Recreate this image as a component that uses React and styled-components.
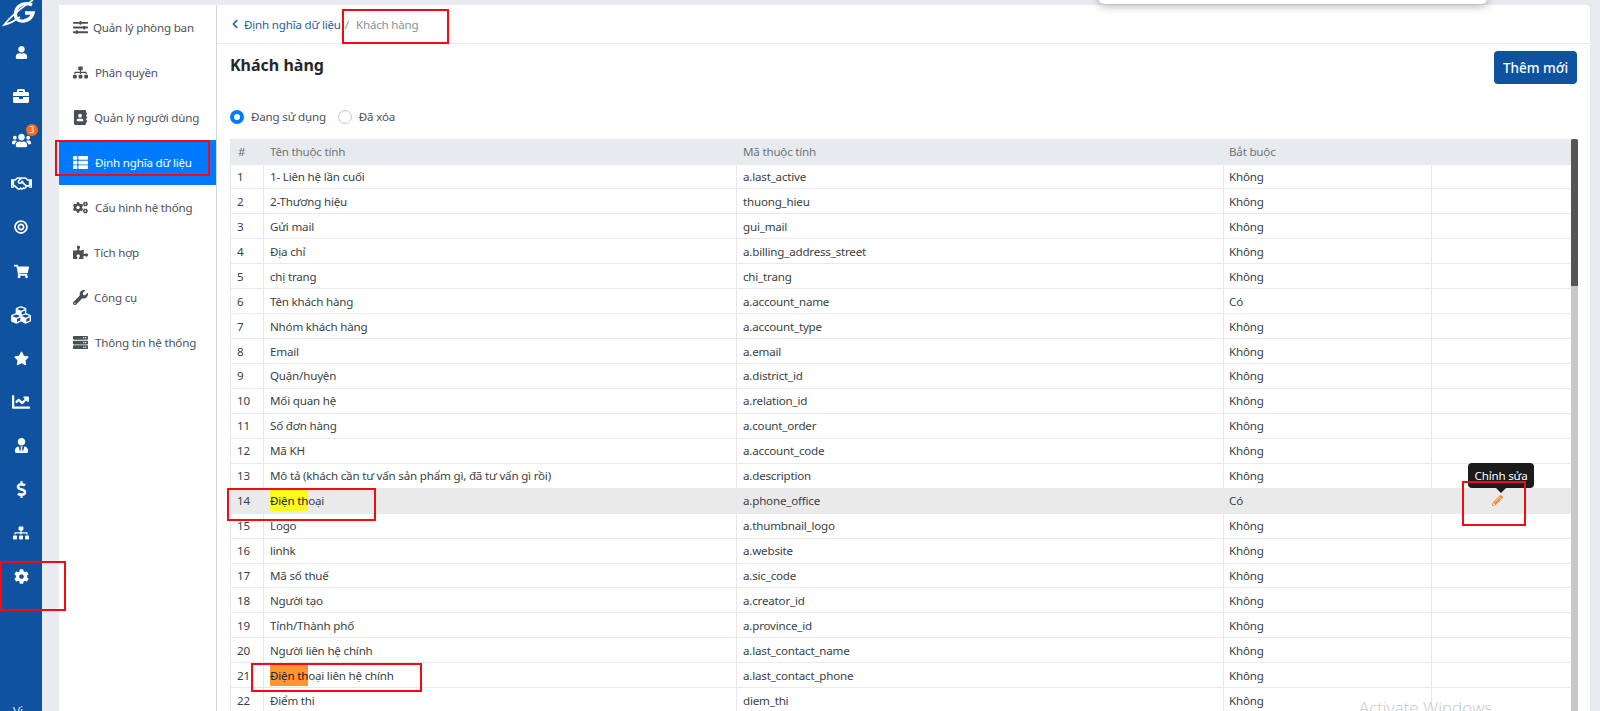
import React from "react";
import styled, { createGlobalStyle } from "styled-components";
import {
  FaUser, FaBriefcase, FaUsers, FaRegHandshake, FaBullseye, FaShoppingCart, FaCubes, FaStar,
  FaChartLine, FaUserTie, FaDollarSign, FaSitemap, FaCog, FaSlidersH, FaAddressBook, FaThList,
  FaCogs, FaPuzzlePiece, FaWrench, FaServer, FaPencilAlt, FaChevronLeft,
} from "react-icons/fa";

const GlobalStyle = createGlobalStyle`
  html, body { margin: 0; height: 100%; overflow: hidden; }
  body {
    font-family: "Noto Sans", "Open Sans", sans-serif;
    font-size: 11.6px;
    letter-spacing: -0.2px;
    color: #33383e;
    background: #e9ebf0;
  }
  * { box-sizing: border-box; }
`;

const Page = styled.div`
  position: relative;
  display: flex;
  width: 1600px;
  height: 711px;
  overflow: hidden;
`;

const Rail = styled.nav`
  position: relative;
  flex: 0 0 42px;
  background: #0f529f;
  color: #fff;
  display: flex;
  flex-direction: column;
  align-items: center;
  padding-top: 31px;
`;

const RailItem = styled.div`
  position: relative;
  width: 100%;
  flex: 0 0 43.65px;
  display: flex;
  align-items: center;
  justify-content: center;
  font-size: ${(p) => p.$size || 15}px;
`;

const Badge = styled.span`
  position: absolute;
  top: 6px;
  left: 26px;
  width: 12px;
  height: 12px;
  border-radius: 50%;
  background: #f26b21;
  color: #fff;
  font-size: 8px;
  line-height: 12px;
  text-align: center;
`;

const LogoMark = styled.svg`
  position: absolute;
  top: 0;
  left: 2px;
`;

const RailFoot = styled.span`
  position: absolute;
  left: 13px;
  bottom: -9px;
  font-size: 12px;
  color: #dfe8f3;
`;

const SubNav = styled.aside`
  flex: 0 0 158px;
  margin: 5px 0 0 17px;
  background: #fff;
  border-right: 1px solid #d5d7db;
`;

const SubItem = styled.div`
  height: 45px;
  display: flex;
  align-items: center;
  padding-left: 14px;
  gap: ${(p) => p.$gap}px;
  color: ${(p) => (p.$active ? "#fff" : "#4b5259")};
  background: ${(p) => (p.$active ? "#007bff" : "transparent")};
  svg {
    font-size: 15px;
    color: ${(p) => (p.$active ? "#fff" : "#4a4f55")};
  }
`;

const Main = styled.main`
  flex: 0 0 1373px;
  margin-top: 5px;
  background: #fff;
  border-top-right-radius: 4px;
  display: flex;
  flex-direction: column;
`;

const Crumbs = styled.div`
  flex: 0 0 39px;
  display: flex;
  align-items: center;
  padding: 0 13px;
  border-bottom: 1px solid #e9ebf0;
  color: #8b9197;
`;

const CrumbLink = styled.span`
  display: flex;
  align-items: center;
  gap: 4px;
  color: #2a6098;
  svg { font-size: 10px; }
`;

const CrumbSep = styled.span`
  margin: 0 7px 0 4px;
`;

const TitleRow = styled.div`
  display: flex;
  justify-content: space-between;
  align-items: flex-start;
  padding: 7px 13px 0;
`;

const Title = styled.h1`
  margin: 3px 0 0;
  font-size: 16px;
  line-height: 22px;
  font-weight: 700;
  letter-spacing: 0;
  color: #23272b;
`;

const AddButton = styled.button`
  width: 83px;
  height: 33px;
  border: 0;
  border-radius: 4px;
  background: #0f529f;
  color: #fff;
  font: 500 13.5px "Noto Sans", sans-serif;
`;

const Filters = styled.div`
  display: flex;
  align-items: center;
  gap: 12px;
  margin: 25px 0 0 13px;
  height: 20px;
`;

const RadioLabel = styled.label`
  display: flex;
  align-items: center;
  gap: 7px;
  color: #4b5259;
`;

const RadioDot = styled.span`
  width: 14px;
  height: 14px;
  border-radius: 50%;
  border: ${(p) => (p.$on ? "4px solid #007bff" : "1px solid #c5c8cc")};
  background: #fff;
`;

const TableWrap = styled.div`
  display: flex;
  margin: 15px 0 0 13px;
  width: 1347px;
`;

const Table = styled.div`
  flex: 1;
  display: grid;
  grid-template-columns: 33px 473px 487px 208px 139px;
  grid-template-rows: 25.5px;
  grid-auto-rows: 24.95px;
  border-left: 1px solid #e6e8ee;
`;

const Row = styled.div`
  display: contents;
`;

const HeadCell = styled.div`
  display: flex;
  align-items: center;
  padding-left: ${(p) => p.$pad ?? 6}px;
  background: #e8ebee;
  color: #6d747b;
`;

const Cell = styled.div`
  display: flex;
  align-items: center;
  padding-left: ${(p) => p.$pad ?? 6}px;
  border-bottom: 1.5px solid #e8eaee;
  border-right: ${(p) => (p.$line ? "1.5px solid #e6e8ee" : "0")};
  background: ${(p) => (p.$hover ? "#eaeaea" : "#fff")};
  color: #3a3f45;
  white-space: pre;
`;

const ActionCell = styled(Cell)`
  justify-content: center;
  padding: 0 8px 0 0;
`;

const Mark = styled.mark`
  background: ${(p) => p.$bg};
  color: #1c1c1c;
  padding: 3px 0;
`;

const EditIcon = styled(FaPencilAlt)`
  color: #f58a3c;
  font-size: 11px;
`;

const ScrollBar = styled.div`
  flex: 0 0 7px;
  height: 600px;
  background: #c8c8c8;
`;

const ScrollThumb = styled.div`
  height: 147px;
  background: #555;
  border-radius: 2px 2px 0 0;
`;

const Popover = styled.div`
  position: absolute;
  top: -10px;
  left: 1099px;
  width: 388px;
  height: 14px;
  background: #fff;
  border-radius: 0 0 5px 5px;
  box-shadow: 0 2px 10px rgba(0, 0, 0, 0.3);
`;

const Tip = styled.div`
  position: absolute;
  left: 1468px;
  top: 463px;
  width: 66px;
  height: 25px;
  background: #1b1b1b;
  color: #fff;
  border-radius: 4px;
  font-size: 11.6px;
  line-height: 26px;
  text-align: center;
  &::after {
    content: "";
    position: absolute;
    left: 27px;
    bottom: -5px;
    border: 6px solid transparent;
    border-bottom: 0;
    border-top-color: #1b1b1b;
  }
`;

const RedBox = styled.div`
  position: absolute;
  left: ${(p) => p.$x}px;
  top: ${(p) => p.$y}px;
  width: ${(p) => p.$w}px;
  height: ${(p) => p.$h}px;
  border: 2px solid #f40a12;
`;

const Watermark = styled.div`
  position: absolute;
  left: 1359px;
  top: 696px;
  font: 300 17px "Open Sans", sans-serif;
  letter-spacing: 0;
  color: #c6c6c6;
`;

const railIcons = [
  { icon: FaUser, size: 13 },
  { icon: FaBriefcase, size: 16 },
  { icon: FaUsers, size: 19, badge: "3" },
  { icon: FaRegHandshake, size: 21 },
  { icon: FaBullseye, size: 14 },
  { icon: FaShoppingCart, size: 15 },
  { icon: FaCubes, size: 20 },
  { icon: FaStar, size: 15 },
  { icon: FaChartLine, size: 18 },
  { icon: FaUserTie, size: 15 },
  { icon: FaDollarSign, size: 17 },
  { icon: FaSitemap, size: 16 },
  { icon: FaCog, size: 15 },
];

const subItems = [
  { icon: FaSlidersH, label: "Quản lý phòng ban", gap: 5 },
  { icon: FaSitemap, label: "Phân quyền", gap: 7 },
  { icon: FaAddressBook, label: "Quản lý người dùng", gap: 6 },
  { icon: FaThList, label: "Định nghĩa dữ liệu", gap: 7, active: true },
  { icon: FaCogs, label: "Cấu hình hệ thống", gap: 7 },
  { icon: FaPuzzlePiece, label: "Tích hợp", gap: 6 },
  { icon: FaWrench, label: "Công cụ", gap: 6 },
  { icon: FaServer, label: "Thông tin hệ thống", gap: 7 },
];

const rows = [
  ["1- Liên hệ lần cuối", "a.last_active", "Không"],
  ["2-Thương hiệu", "thuong_hieu", "Không"],
  ["Gửi mail", "gui_mail", "Không"],
  ["Địa chỉ", "a.billing_address_street", "Không"],
  ["chị trang", "chi_trang", "Không"],
  ["Tên khách hàng", "a.account_name", "Có"],
  ["Nhóm khách hàng", "a.account_type", "Không"],
  ["Email", "a.email", "Không"],
  ["Quận/huyện", "a.district_id", "Không"],
  ["Mối quan hệ", "a.relation_id", "Không"],
  ["Số đơn hàng", "a.count_order", "Không"],
  ["Mã KH", "a.account_code", "Không"],
  ["Mô tả (khách cần tư vấn sản phẩm gì, đã tư vấn gì rồi)", "a.description", "Không"],
  ["Điện thoại", "a.phone_office", "Có"],
  ["Logo", "a.thumbnail_logo", "Không"],
  ["linhk", "a.website", "Không"],
  ["Mã số thuế", "a.sic_code", "Không"],
  ["Người tạo", "a.creator_id", "Không"],
  ["Tỉnh/Thành phố", "a.province_id", "Không"],
  ["Người liên hệ chính", "a.last_contact_name", "Không"],
  ["Điện thoại liên hệ chính", "a.last_contact_phone", "Không"],
  ["Điểm thi", "diem_thi", "Không"],
];

const redBoxes = [
  { x: 342, y: 9, w: 107, h: 35 },
  { x: 55, y: 140, w: 155, h: 36 },
  { x: 0, y: 561, w: 66, h: 50 },
  { x: 227, y: 488, w: 149, h: 33 },
  { x: 251, y: 663, w: 171, h: 29 },
  { x: 1462, y: 481, w: 64, h: 45 },
];

function NameText({ value }) {
  const prefix = "Điện th";
  if (!value.startsWith(prefix)) return value;
  const bg = value === "Điện thoại" ? "#fbfb1e" : "#ff9632";
  return (
    <span>
      <Mark $bg={bg}>{prefix}</Mark>
      {value.slice(prefix.length)}
    </span>
  );
}

export default function App() {
  return (
    <Page>
      <GlobalStyle />
      <Rail>
        <LogoMark width="36" height="27" viewBox="0 0 36 27" fill="none" stroke="#fff">
          <path d="M31 0 C22 6 10 14 2 25 C9 23 14 20 18 17" strokeWidth="1.6" />
          <path d="M30 5 C24 2 16 4 14 11 C12 18 16 22 22 21 C27 20 30 17 31 13 L23 13" strokeWidth="3.4" />
        </LogoMark>
        {railIcons.map((item, i) => (
          <RailItem key={i} $size={item.size}>
            <item.icon />
            {item.badge && <Badge>{item.badge}</Badge>}
          </RailItem>
        ))}
        <RailFoot>Vi</RailFoot>
      </Rail>
      <SubNav>
        {subItems.map((item) => (
          <SubItem key={item.label} $active={item.active} $gap={item.gap}>
            <item.icon />
            {item.label}
          </SubItem>
        ))}
      </SubNav>
      <Main>
        <Crumbs>
          <CrumbLink>
            <FaChevronLeft />
            Định nghĩa dữ liệu
          </CrumbLink>
          <CrumbSep>/</CrumbSep>
          Khách hàng
        </Crumbs>
        <TitleRow>
          <Title>Khách hàng</Title>
          <AddButton>Thêm mới</AddButton>
        </TitleRow>
        <Filters>
          <RadioLabel><RadioDot $on />Đang sử dụng</RadioLabel>
          <RadioLabel><RadioDot />Đã xóa</RadioLabel>
        </Filters>
        <TableWrap>
          <Table>
            <HeadCell $pad={7}>#</HeadCell>
            <HeadCell>Tên thuộc tính</HeadCell>
            <HeadCell $pad={6}>Mã thuộc tính</HeadCell>
            <HeadCell $pad={5}>Bắt buộc</HeadCell>
            <HeadCell />
            {rows.map((row, i) => {
              const hover = i === 13;
              return (
                <Row key={row[1]}>
                  <Cell $hover={hover} $line>{i + 1}</Cell>
                  <Cell $hover={hover} $line><NameText value={row[0]} /></Cell>
                  <Cell $hover={hover} $pad={6} $line>{row[1]}</Cell>
                  <Cell $hover={hover} $pad={5} $line>{row[2]}</Cell>
                  <ActionCell $hover={hover}>{hover && <EditIcon />}</ActionCell>
                </Row>
              );
            })}
          </Table>
          <ScrollBar><ScrollThumb /></ScrollBar>
        </TableWrap>
      </Main>
      <Popover />
      <Tip>Chỉnh sửa</Tip>
      {redBoxes.map((b) => (
        <RedBox key={`${b.x}-${b.y}`} $x={b.x} $y={b.y} $w={b.w} $h={b.h} />
      ))}
      <Watermark>Activate Windows</Watermark>
    </Page>
  );
}
